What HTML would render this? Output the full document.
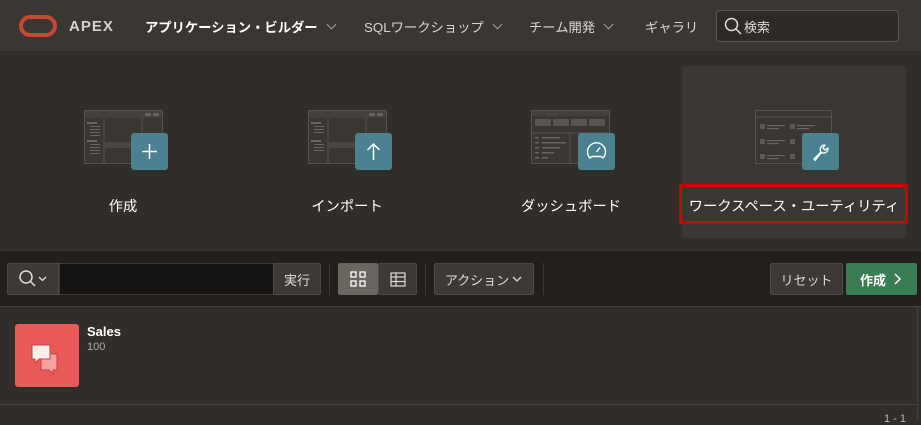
<!DOCTYPE html>
<html><head><meta charset="utf-8">
<style>
*{margin:0;padding:0;box-sizing:border-box}
body{width:921px;height:420px;overflow:hidden;background:#312d2a;font-family:"Liberation Sans","Noto Sans CJK JP",sans-serif;color:#fff;position:relative}
.hdr{position:absolute;left:0;top:0;width:921px;height:52px;background:#3a3632;border-bottom:1px solid #2a2623}
.abs{position:absolute}
.nav{position:absolute;top:17px;font-size:13.3px;color:#d9d6d3;white-space:nowrap}
.chev{display:inline-block;width:7px;height:7px;border-right:1.5px solid #a9a5a1;border-bottom:1.5px solid #a9a5a1;transform:rotate(45deg);margin-left:10px;position:relative;top:-4px}
.tile{position:absolute;top:66px;width:224px;height:172px}
.lbl{position:absolute;top:195px;font-size:14.3px;color:#fff;transform:translateX(-50%);white-space:nowrap}
.win{position:absolute;top:110px}
.badge{position:absolute;top:133px;width:37px;height:37px;background:#4a8291;border-radius:3px}
.tb{position:absolute;left:0;top:250px;width:921px;height:57px;background:#221f1c;border-top:1px solid #3a3632;border-bottom:1px solid #45403b}
.btn{position:absolute;top:263px;height:32px;background:#3d3935;border:1px solid #4e4944;border-radius:2px;font-size:13px;color:#ddd;display:flex;align-items:center;justify-content:center}
.sep{position:absolute;top:263px;width:1px;height:32px;background:#3d3935}
</style></head><body>
<div class="hdr">
  <div class="abs" style="left:19px;top:15px;width:38px;height:22px;border:4.5px solid #c74634;border-radius:11px"></div>
  <div class="abs" style="left:69px;top:18px;font-size:15px;font-weight:bold;color:#d4d1ce;letter-spacing:1px">APEX</div>
  <div class="nav" style="left:145px;color:#fff;font-weight:bold">アプリケーション・ビルダー<span class="chev"></span></div>
  <div class="nav" style="left:364px">SQLワークショップ<span class="chev"></span></div>
  <div class="nav" style="left:529px">チーム開発<span class="chev"></span></div>
  <div class="nav" style="left:645px">ギャラリ</div>
  <div class="abs" style="left:716px;top:10px;width:183px;height:32px;border:1px solid #5a5550;border-radius:4px;background:#2e2a27">
    <svg class="abs" style="left:7px;top:6px" width="18" height="18" viewBox="0 0 18 18"><circle cx="7.5" cy="7.5" r="6" fill="none" stroke="#ddd" stroke-width="1.5"/><line x1="12" y1="12" x2="17" y2="17" stroke="#ddd" stroke-width="1.5"/></svg>
    <div class="abs" style="left:27px;top:6px;font-size:13px;color:#ddd">検索</div>
  </div>
</div>

<div class="tile" style="left:682px;background:#3a3632;border-radius:2px"></div>

<svg class="win" style="left:84px" width="80" height="56" viewBox="0 0 80 56"><rect x="0.5" y="0.5" width="78" height="53" fill="#3a3632" stroke="#57524c"/><rect x="1" y="1" width="77" height="7" fill="#45403b"/><rect x="61" y="3" width="6" height="3" fill="#666"/><rect x="69" y="3" width="6" height="3" fill="#666"/><line x1="20" y1="8" x2="20" y2="54" stroke="#57524c"/><line x1="58" y1="8" x2="58" y2="54" stroke="#57524c"/><rect x="21" y="32" width="37" height="6" fill="#4a4540"/><g fill="#666"><rect x="3" y="12" width="10" height="2"/><rect x="6" y="16" width="10" height="1"/><rect x="6" y="19" width="10" height="1"/><rect x="6" y="22" width="10" height="1"/><rect x="6" y="25" width="10" height="1"/><rect x="3" y="30" width="10" height="2"/><rect x="6" y="34" width="10" height="1"/><rect x="6" y="37" width="10" height="1"/><rect x="6" y="40" width="10" height="1"/><rect x="6" y="43" width="10" height="1"/></g></svg>
<div class="badge" style="left:131px"><svg width="37" height="37"><line x1="18.5" y1="11" x2="18.5" y2="26" stroke="#fff" stroke-width="1.5"/><line x1="11" y1="18.5" x2="26" y2="18.5" stroke="#fff" stroke-width="1.5"/></svg></div>

<svg class="win" style="left:308px" width="80" height="56" viewBox="0 0 80 56"><rect x="0.5" y="0.5" width="78" height="53" fill="#3a3632" stroke="#57524c"/><rect x="1" y="1" width="77" height="7" fill="#45403b"/><rect x="61" y="3" width="6" height="3" fill="#666"/><rect x="69" y="3" width="6" height="3" fill="#666"/><line x1="20" y1="8" x2="20" y2="54" stroke="#57524c"/><line x1="58" y1="8" x2="58" y2="54" stroke="#57524c"/><rect x="21" y="32" width="37" height="6" fill="#4a4540"/><g fill="#666"><rect x="3" y="12" width="10" height="2"/><rect x="6" y="16" width="10" height="1"/><rect x="6" y="19" width="10" height="1"/><rect x="6" y="22" width="10" height="1"/><rect x="3" y="30" width="10" height="2"/><rect x="6" y="34" width="10" height="1"/><rect x="6" y="37" width="10" height="1"/><rect x="6" y="40" width="10" height="1"/></g></svg>
<div class="badge" style="left:355px"><svg width="37" height="37"><path d="M18.5 27V11M12.5 17L18.5 11L24.5 17" fill="none" stroke="#fff" stroke-width="1.5"/></svg></div>

<svg class="win" style="left:531px" width="80" height="56" viewBox="0 0 80 56"><rect x="0.5" y="0.5" width="78" height="53" fill="#3a3632" stroke="#57524c"/><rect x="1" y="1" width="77" height="5" fill="#45403b"/><g fill="#5a5550"><rect x="4" y="9" width="16" height="7"/><rect x="22" y="9" width="16" height="7"/><rect x="40" y="9" width="16" height="7"/><rect x="58" y="9" width="16" height="7"/></g><line x1="1" y1="23" x2="78" y2="23" stroke="#57524c"/><line x1="39" y1="23" x2="39" y2="54" stroke="#57524c"/><g fill="#666"><rect x="4" y="27" width="4" height="1.5"/><rect x="11" y="27" width="18" height="1.5"/><rect x="4" y="32" width="4" height="1.5"/><rect x="11" y="32" width="24" height="1.5"/><rect x="4" y="37" width="4" height="1.5"/><rect x="11" y="37" width="18" height="1.5"/><rect x="4" y="42" width="4" height="1.5"/><rect x="11" y="42" width="12" height="1.5"/><rect x="4" y="47" width="4" height="1.5"/><rect x="11" y="47" width="6" height="1.5"/></g></svg>
<div class="badge" style="left:578px"><svg width="37" height="37"><path d="M12 25A9 9 0 1 1 25 25L23 23.5H14Z" fill="none" stroke="#fff" stroke-width="1.4"/><line x1="18.5" y1="19" x2="22" y2="14.5" stroke="#fff" stroke-width="1.4"/></svg></div>

<svg class="win" style="left:755px" width="80" height="56" viewBox="0 0 80 56"><rect x="0.5" y="0.5" width="76" height="53" fill="#3a3632" stroke="#57524c"/><line x1="1" y1="7" x2="76" y2="7" stroke="#57524c"/><g fill="#5e5954"><rect x="5" y="14" width="5" height="5"/><rect x="35" y="14" width="5" height="5"/><rect x="5" y="29" width="5" height="5"/><rect x="35" y="29" width="5" height="5"/><rect x="5" y="44" width="5" height="5"/><rect x="35" y="44" width="5" height="5"/></g><g fill="#666"><rect x="12" y="15" width="18" height="1.2"/><rect x="12" y="18" width="12" height="1.2"/><rect x="42" y="15" width="18" height="1.2"/><rect x="42" y="18" width="12" height="1.2"/><rect x="12" y="30" width="18" height="1.2"/><rect x="12" y="33" width="12" height="1.2"/><rect x="12" y="45" width="18" height="1.2"/><rect x="12" y="48" width="12" height="1.2"/></g></svg>
<div class="badge" style="left:802px"><svg width="37" height="37"><path d="M12 26L19 19A4.5 4.5 0 0 1 23 12L21 15L23 17L26 15A4.5 4.5 0 0 1 19.5 19.5L13 27.5Z" fill="none" stroke="#fff" stroke-width="1.3" stroke-linejoin="round"/></svg></div>

<div class="lbl" style="left:123px">作成</div>
<div class="lbl" style="left:347px">インポート</div>
<div class="lbl" style="left:571px">ダッシュボード</div>
<div class="abs" style="left:679px;top:184px;width:229px;height:40px;border:3px solid #c00"></div>
<div class="lbl" style="left:794px">ワークスペース・ユーティリティ</div>

<div class="tb"></div>
<div class="btn" style="left:7px;width:52px;border-radius:2px 0 0 2px"><svg width="34" height="20"><circle cx="10" cy="8" r="6" fill="none" stroke="#ddd" stroke-width="1.5"/><line x1="14.5" y1="12.5" x2="19" y2="17" stroke="#ddd" stroke-width="1.5"/><path d="M23 8L26.5 11.5L30 8" fill="none" stroke="#ddd" stroke-width="1.3"/></svg></div>
<div class="abs" style="left:59px;top:263px;width:215px;height:32px;background:#161412;border:1px solid #3d3935"></div>
<div class="btn" style="left:273px;width:48px">実行</div>
<div class="sep" style="left:329px"></div>
<div class="btn" style="left:338px;width:40px;background:#6b6560;border-color:#6b6560"><svg width="16" height="16"><g fill="none" stroke="#fff" stroke-width="1.3"><rect x="1" y="1" width="5" height="5"/><rect x="10" y="1" width="5" height="5"/><rect x="1" y="10" width="5" height="5"/><rect x="10" y="10" width="5" height="5"/></g></svg></div>
<div class="btn" style="left:378px;width:39px"><svg width="16" height="15"><g fill="none" stroke="#ddd" stroke-width="1.2"><rect x="1" y="1" width="14" height="13"/><line x1="1" y1="5" x2="15" y2="5"/><line x1="1" y1="9.5" x2="15" y2="9.5"/><line x1="6" y1="1" x2="6" y2="14"/></g></svg></div>
<div class="sep" style="left:425px"></div>
<div class="btn" style="left:434px;width:100px">アクション<svg width="12" height="10" style="margin-left:2px"><path d="M2 3L6 7L10 3" fill="none" stroke="#ddd" stroke-width="1.3"/></svg></div>
<div class="sep" style="left:543px"></div>
<div class="btn" style="left:770px;width:73px">リセット</div>
<div class="btn" style="left:846px;width:71px;background:#3a7d55;border-color:#3a7d55;color:#fff;font-weight:bold">作成<svg width="12" height="14" style="margin-left:5px"><path d="M4 2L9 7L4 12" fill="none" stroke="#fff" stroke-width="1.5"/></svg></div>

<div class="abs" style="left:917px;top:307px;width:1px;height:113px;background:#45403b"></div>
<div class="abs" style="left:15px;top:324px;width:64px;height:63px;background:#e85b58;border-radius:3px">
  <svg width="64" height="63"><path d="M26 30H42V46H38V50L34 46H26Z" fill="#f4a3a0" stroke="#c9403d" stroke-width="1"/><path d="M17 21H35V35H24L20 39V35H17Z" fill="#fdeeee" stroke="#c9403d" stroke-width="1"/></svg>
</div>
<div class="abs" style="left:87px;top:324px;font-size:13px;font-weight:bold;color:#fff">Sales</div>
<div class="abs" style="left:87px;top:341px;font-size:11px;color:#aaa">100</div>
<div class="abs" style="left:0;top:404px;width:917px;height:1px;background:#45403b"></div>
<div class="abs" style="left:884px;top:413px;font-size:11px;color:#bbb">1 - 1</div>
</body></html>
